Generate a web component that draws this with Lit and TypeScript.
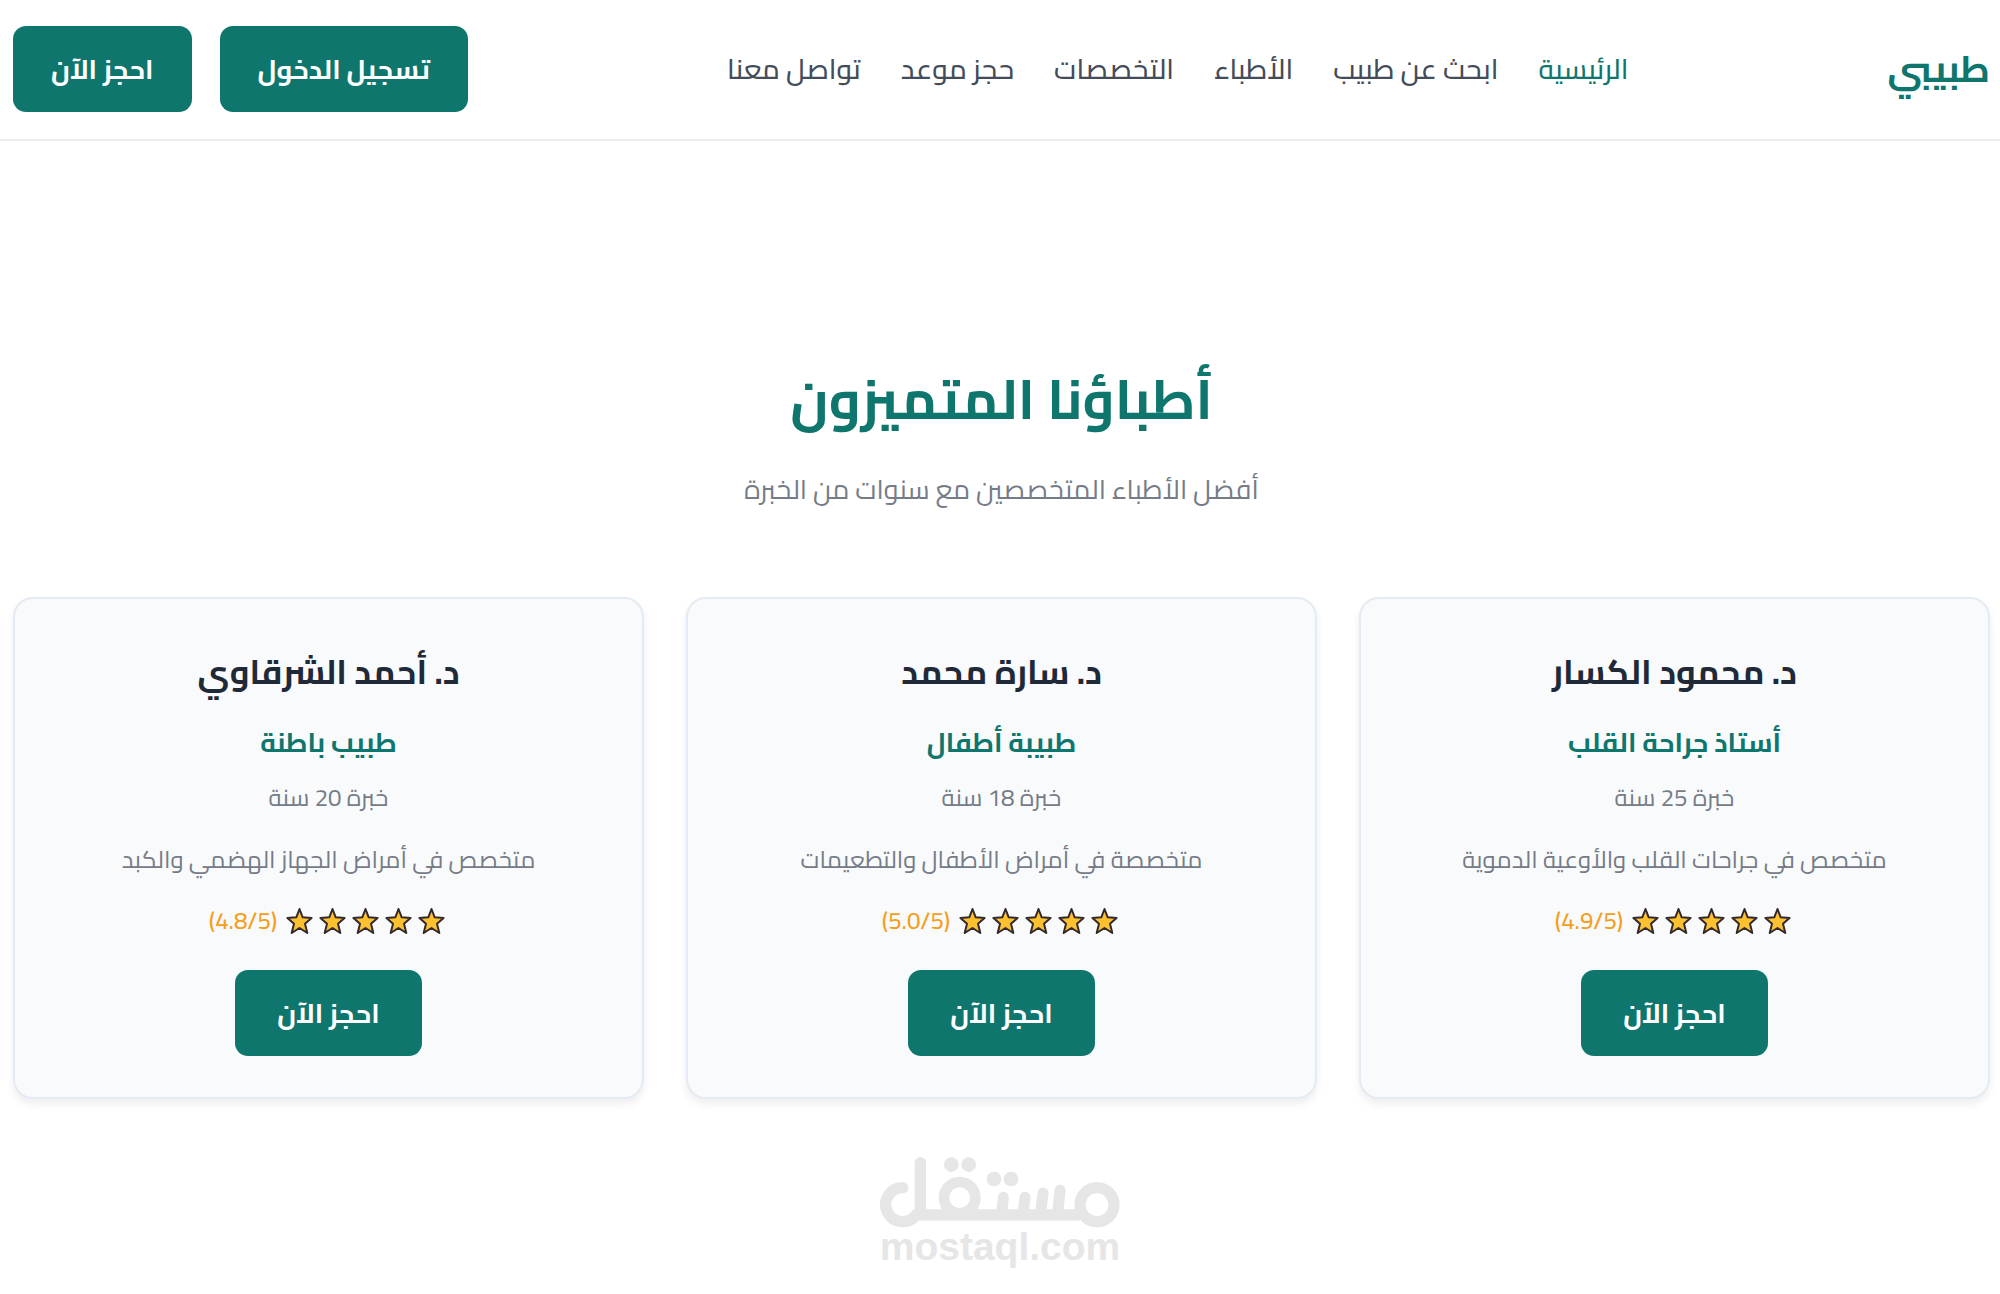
import { LitElement, html, css, svg } from "lit";
import { customElement, property } from "lit/decorators.js";
import { classMap } from "lit/directives/class-map.js";

interface Doctor {
  name: string;
  specialty: string;
  years: number;
  about: string;
  rating: string;
}

const NAV_ITEMS = ["الرئيسية", "ابحث عن طبيب", "الأطباء", "التخصصات", "حجز موعد", "تواصل معنا"];

const DOCTORS: Doctor[] = [
  {
    name: "د. محمود الكسار",
    specialty: "أستاذ جراحة القلب",
    years: 25,
    about: "متخصص في جراحات القلب والأوعية الدموية",
    rating: "4.9",
  },
  {
    name: "د. سارة محمد",
    specialty: "طبيبة أطفال",
    years: 18,
    about: "متخصصة في أمراض الأطفال والتطعيمات",
    rating: "5.0",
  },
  {
    name: "د. أحمد الشرقاوي",
    specialty: "طبيب باطنة",
    years: 20,
    about: "متخصص في أمراض الجهاز الهضمي والكبد",
    rating: "4.8",
  },
];

const buttonStyles = css`
  .btn {
    border: 0;
    border-radius: 13px;
    padding: 17px 38px;
    background: #0f766e;
    color: #ffffff;
    font-family: inherit;
    font-size: 27px;
    font-weight: 700;
    line-height: 52px;
    cursor: pointer;
  }
  .btn:hover {
    background: #115e59;
  }
`;

@customElement("star-row")
export class StarRow extends LitElement {
  @property({ type: Number }) count = 5;

  static styles = css`
    :host {
      display: flex;
    }
    .star {
      width: 33px;
      height: 32px;
      display: block;
    }
    .shape {
      fill: #fdc02f;
      stroke: #33282c;
      stroke-width: 2;
      stroke-linejoin: round;
    }
  `;

  render() {
    return Array.from(
      { length: this.count },
      () => html`<svg class="star" viewBox="0 0 33 32" aria-hidden="true">
        ${svg`<path class="shape" d="M16.500 4l3.200 8.300 8.900.7-6.600 5.800 2.300 9.200-7.800-5-7.800 5 2.300-9.200-6.600-5.800 8.900-.7z"/>`}
      </svg>`
    );
  }
}

@customElement("doctor-card")
export class DoctorCard extends LitElement {
  @property({ attribute: false }) doctor!: Doctor;

  static styles = [
    buttonStyles,
    css`
      :host {
        display: block;
      }
      .card {
        display: flex;
        flex-direction: column;
        align-items: center;
        padding: 41px;
        border: 2px solid #e5ebf4;
        border-radius: 20px;
        background: #f8fafc;
        box-shadow: 0 5px 8px rgba(0, 0, 0, 0.07);
        text-align: center;
      }
      .name,
      .specialty,
      .years,
      .about {
        margin: 0;
      }
      .name {
        color: #1f2937;
        font-size: 34px;
        font-weight: 700;
        line-height: 64px;
        margin-bottom: 12px;
      }
      .specialty {
        color: #0f766e;
        font-size: 27px;
        font-weight: 700;
        line-height: 52px;
        margin-bottom: 8px;
      }
      .years,
      .about {
        color: #757c87;
        font-size: 24px;
        line-height: 44px;
        margin-bottom: 18px;
      }
      .about {
        margin-bottom: 17px;
      }
      .rating {
        display: flex;
        align-items: center;
        gap: 6px;
        margin-bottom: 27px;
        color: #f59e1b;
        font-size: 24px;
        font-weight: 500;
        line-height: 44px;
      }
      .btn {
        padding: 17px 42px;
      }
    `,
  ];

  render() {
    const d = this.doctor;
    return html`
      <article class="card">
        <h3 class="name">${d.name}</h3>
        <p class="specialty">${d.specialty}</p>
        <p class="years">خبرة ${d.years} سنة</p>
        <p class="about">${d.about}</p>
        <div class="rating">
          <star-row></star-row>
          <span dir="ltr">(${d.rating}/5)</span>
        </div>
        <button class="btn" type="button">احجز الآن</button>
      </article>
    `;
  }
}

@customElement("app-root")
export class AppRoot extends LitElement {
  static styles = [
    buttonStyles,
    css`
      :host {
        display: block;
        min-height: 100vh;
        background: #ffffff;
        font-family: Cairo, "DejaVu Sans", sans-serif;
      }
      .header {
        display: flex;
        align-items: center;
        justify-content: space-between;
        padding: 26px 10px 27px 13px;
        border-bottom: 2px solid #ececec;
      }
      .logo {
        color: #0f766e;
        font-size: 37px;
        font-weight: 700;
        line-height: 68px;
        text-decoration: none;
      }
      .nav {
        display: flex;
        gap: 40px;
      }
      .link {
        color: #434c59;
        font-size: 28px;
        font-weight: 500;
        line-height: 52px;
        text-decoration: none;
      }
      .link.active {
        color: #0f766e;
      }
      .actions {
        display: flex;
        gap: 28px;
      }
      .section {
        padding: 206px 10px 58px 13px;
      }
      .title {
        margin: 0 0 12px;
        color: #0f766e;
        font-size: 55px;
        font-weight: 700;
        line-height: 104px;
        text-align: center;
      }
      .subtitle {
        margin: 0 0 82px;
        color: #757c87;
        font-size: 27px;
        line-height: 52px;
        text-align: center;
      }
      .grid {
        display: grid;
        grid-template-columns: repeat(3, minmax(0, 1fr));
        gap: 42px;
      }
      .mark {
        display: flex;
        flex-direction: column;
        align-items: center;
        color: #e6e6e6;
      }
      .mark-logo {
        display: block;
        width: 240px;
        height: 71px;
      }
      .mark-name {
        font-family: "Liberation Sans", Arial, sans-serif;
        font-size: 39px;
        font-weight: 700;
        line-height: 38px;
      }
    `,
  ];

  render() {
    return html`
      <div dir="rtl" lang="ar">
        <header class="header">
          <a class="logo" href="#">طبيبي</a>
          <nav class="nav">
            ${NAV_ITEMS.map(
              (item, i) => html`<a class=${classMap({ link: true, active: i === 0 })} href="#">${item}</a>`
            )}
          </nav>
          <div class="actions">
            <button class="btn" type="button">تسجيل الدخول</button>
            <button class="btn" type="button">احجز الآن</button>
          </div>
        </header>
        <main class="section">
          <h2 class="title">أطباؤنا المتميزون</h2>
          <p class="subtitle">أفضل الأطباء المتخصصين مع سنوات من الخبرة</p>
          <div class="grid">${DOCTORS.map((d) => html`<doctor-card .doctor=${d}></doctor-card>`)}</div>
        </main>
        <footer class="mark">
          <svg class="mark-logo" viewBox="60 51 720 213" role="img" aria-label="مستقل">
            <g fill="none" stroke="currentColor" stroke-linecap="round" stroke-width="34">
              <path d="M128 143A51 51 0 1 0 170 223" />
              <path d="M181 68V224.500H655" />
              <circle cx="711" cy="194" r="51" />
              <circle cx="299" cy="173" r="47" stroke-width="32" />
              <path d="M430 172L425 222M495 172L489 222M549 159L542 222M600 151L593 222" stroke-width="33" />
            </g>
            <g fill="currentColor">
              <circle cx="274" cy="74" r="22" />
              <circle cx="326" cy="74" r="22" />
              <circle cx="402" cy="117" r="22" />
              <circle cx="453" cy="117" r="22" />
            </g>
          </svg>
          <span class="mark-name" dir="ltr">mostaql.com</span>
        </footer>
      </div>
    `;
  }
}
